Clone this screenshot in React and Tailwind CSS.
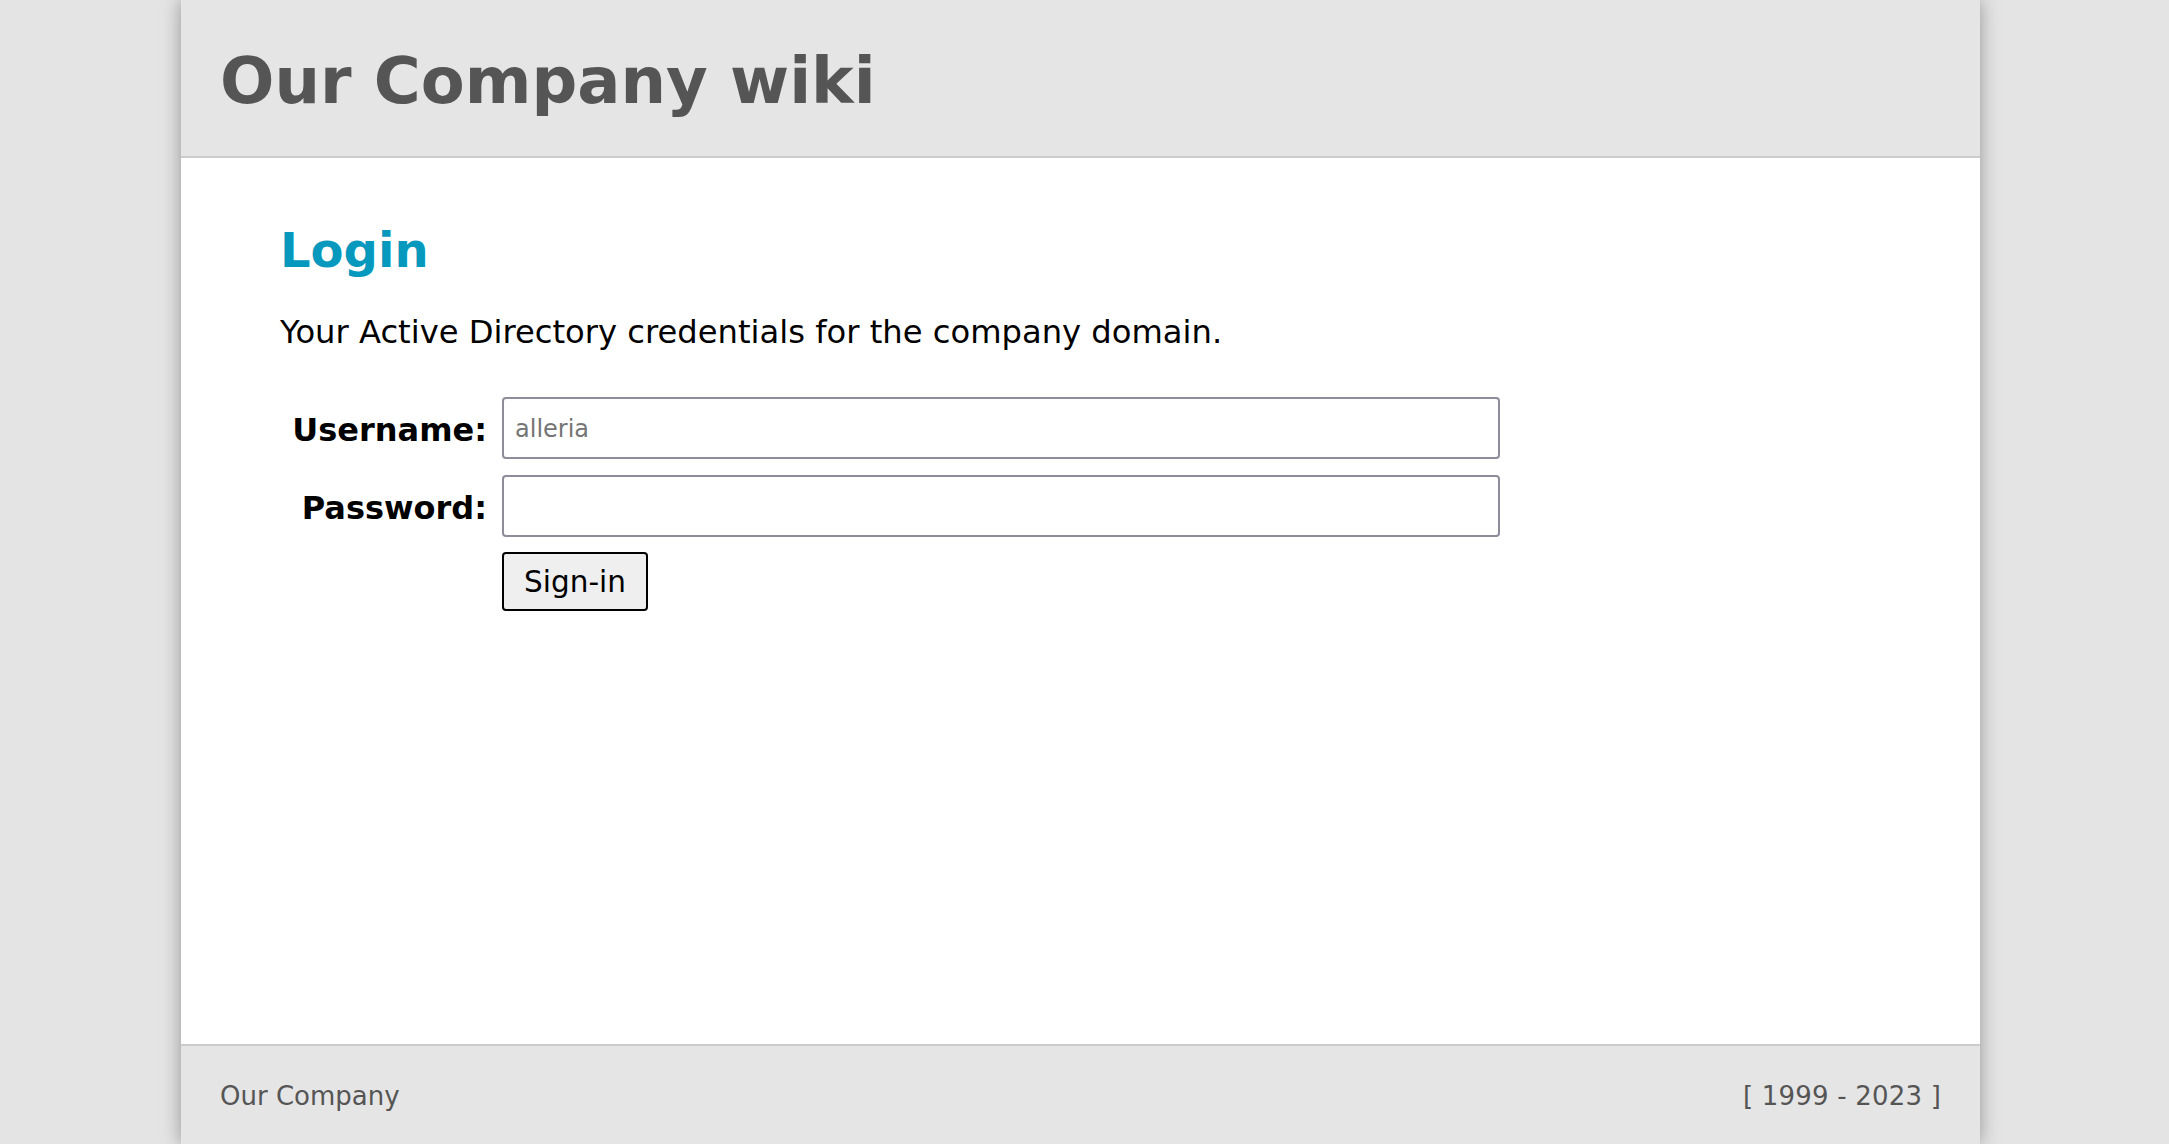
import React from 'react';

const font = { fontFamily: '"DejaVu Sans", Verdana, sans-serif' };

const LoginForm = () => {
  return (
    <div className="mt-[49px] grid grid-cols-[207px_998px] gap-x-[15px] gap-y-[16px] items-center">
      <label htmlFor="username" className="pt-[3px] text-right text-[32px] font-bold leading-none text-black">
        Username:
      </label>
      <input
        id="username"
        type="text"
        placeholder="alleria"
        className="h-[62px] w-full rounded-[4px] border-2 border-[#8e8c9a] bg-white px-[11px] pt-[2px] text-[24px] text-black placeholder:text-[#757575] outline-none"
        style={font}
      />

      <label htmlFor="password" className="pt-[3px] text-right text-[32px] font-bold leading-none text-black">
        Password:
      </label>
      <input
        id="password"
        type="password"
        className="h-[62px] w-full rounded-[4px] border-2 border-[#8e8c9a] bg-white px-[11px] text-[24px] outline-none"
        style={font}
      />

      <div />
      <div className="-mt-[1px]">
        <button
          type="submit"
          className="h-[59px] w-[146px] rounded-[4px] border-2 border-black bg-[#efefef] pt-[3px] text-[29.5px] leading-none text-black"
          style={font}
        >
          Sign-in
        </button>
      </div>
    </div>
  );
};

const App = () => {
  return (
    <div className="min-h-screen w-full bg-[#e4e4e4]" style={font}>
      <div className="ml-[181px] flex h-[1144px] w-[1799px] flex-col bg-white shadow-[0_0_18px_rgba(0,0,0,0.35)]">
        <header className="h-[158px] shrink-0 border-b-2 border-[#cccccc] bg-[#e5e5e5] pl-[39px] pt-[49px]">
          <h1 className="text-[64px] font-bold leading-none text-[#555555]">Our Company wiki</h1>
        </header>

        <main className="flex-1 pl-[99px] pt-[68px]">
          <h2 className="text-[48px] font-bold leading-none text-[#0699bd]">Login</h2>
          <p className="mt-[42px] text-[32.2px] leading-none text-black">
            Your Active Directory credentials for the company domain.
          </p>
          <LoginForm />
        </main>

        <footer className="flex h-[100px] shrink-0 justify-between border-t-2 border-[#cccccc] bg-[#e5e5e5] px-[39px] pt-[37px] text-[26px] leading-none text-[#555555]">
          <span>Our Company</span>
          <span className="tracking-[0.2px]">[ 1999 - 2023 ]</span>
        </footer>
      </div>
    </div>
  );
};

export default App;
